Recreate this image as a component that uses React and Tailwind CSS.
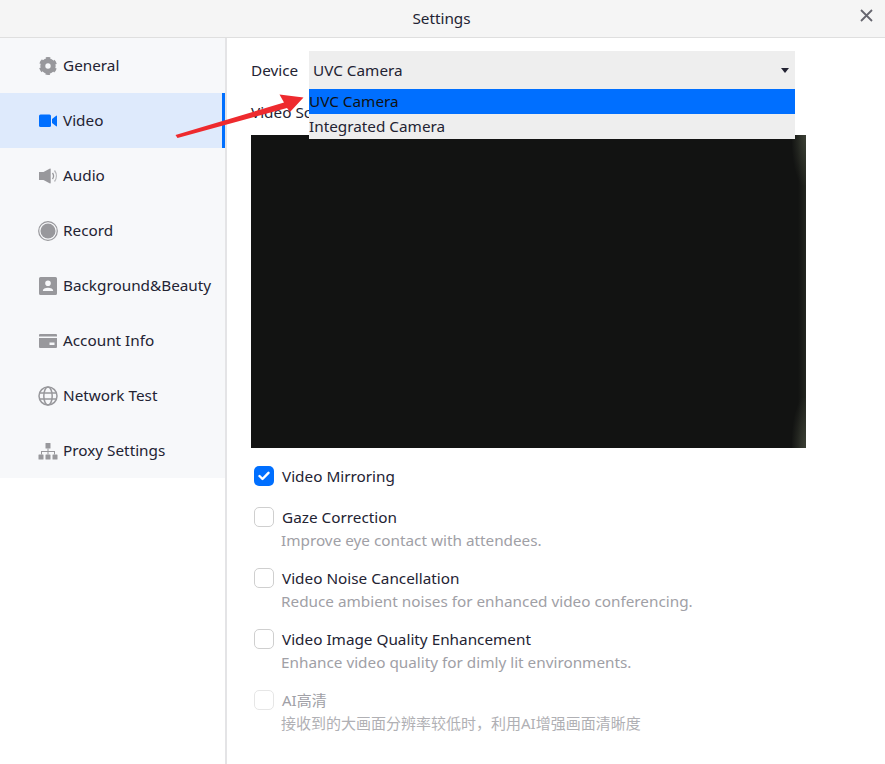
import React from 'react';

const NAV = [
  { key: 'general', label: 'General' },
  { key: 'video', label: 'Video', active: true },
  { key: 'audio', label: 'Audio' },
  { key: 'record', label: 'Record' },
  { key: 'beauty', label: 'Background&Beauty' },
  { key: 'account', label: 'Account Info' },
  { key: 'network', label: 'Network Test' },
  { key: 'proxy', label: 'Proxy Settings' },
];

const OPTIONS = [
  { title: 'Video Mirroring', checked: true },
  { title: 'Gaze Correction', desc: 'Improve eye contact with attendees.' },
  { title: 'Video Noise Cancellation', desc: 'Reduce ambient noises for enhanced video conferencing.' },
  { title: 'Video Image Quality Enhancement', desc: 'Enhance video quality for dimly lit environments.' },
  { title: 'AI高清', desc: '接收到的大画面分辨率较低时，利用AI增强画面清晰度', disabled: true },
];

function NavIcon({ name, color }) {
  if (name === 'general') {
    return (
      <svg width="20" height="20" viewBox="0 0 20 20" fill="none" stroke={color}>
        <circle cx="10" cy="10" r="5.2" strokeWidth="5" />
        <circle cx="10" cy="10" r="7.8" strokeWidth="2.4" strokeDasharray="4.2 3.97" transform="rotate(-105 10 10)" />
      </svg>
    );
  }
  if (name === 'video') {
    return (
      <svg width="20" height="20" viewBox="0 0 20 20" fill={color}>
        <rect x="1" y="3.5" width="12" height="12.5" rx="1.5" />
        <path d="M14 8 18.500 4.500c.3 0 .5.2.5.5v10c0 .3-.2.5-.5.5L14 12z" />
      </svg>
    );
  }
  if (name === 'audio') {
    return (
      <svg width="20" height="20" viewBox="0 0 20 20" fill={color}>
        <path d="M1 6h4.500L12 2.500c.3-.2.7 0 .7.4v14.200c0 .4-.4.6-.7.4L5.500 14H1z" />
        <path d="M14.500 7c1.300 1.800 1.300 4.200 0 6" fill="none" stroke={color} strokeWidth="1.300" />
        <path d="M16.500 4.500c2.400 3.200 2.400 7.800 0 11" fill="none" stroke={color} strokeWidth="1.300" opacity="0.7" />
      </svg>
    );
  }
  if (name === 'record') {
    return (
      <svg width="20" height="20" viewBox="0 0 20 20">
        <circle cx="10" cy="10" r="9.300" fill="none" stroke={color} strokeWidth="1.200" />
        <circle cx="10" cy="10" r="7.500" fill={color} />
      </svg>
    );
  }
  if (name === 'beauty') {
    return (
      <svg width="20" height="20" viewBox="0 0 20 20" fill={color}>
        <path fillRule="evenodd" d="M2.500 1h15A1.500 1.500 0 0 1 19 2.500v15a1.500 1.500 0 0 1-1.500 1.500h-15A1.500 1.500 0 0 1 1 17.500v-15A1.500 1.500 0 0 1 2.500 1zM10 4.500a2.800 2.800 0 1 0 0 5.600 2.800 2.800 0 0 0 0-5.600zM4.800 15h10.400c0-2.200-2.400-3.200-5.200-3.200S4.800 12.800 4.800 15z" />
      </svg>
    );
  }
  if (name === 'account') {
    return (
      <svg width="20" height="20" viewBox="0 0 20 20" fill={color}>
        <path fillRule="evenodd" d="M2 3h16a1 1 0 0 1 1 1v1.500H1V4a1 1 0 0 1 1-1zM1 7h18v9a1 1 0 0 1-1 1H2a1 1 0 0 1-1-1zm10.500 4.500v2.500h5v-2.500z" />
      </svg>
    );
  }
  if (name === 'network') {
    return (
      <svg width="20" height="20" viewBox="0 0 20 20" fill="none" stroke={color} strokeWidth="1.500">
        <circle cx="10" cy="10" r="9" />
        <ellipse cx="10" cy="10" rx="4.200" ry="9" />
        <path d="M1.500 7h17M1.500 13h17" />
      </svg>
    );
  }
  return (
    <svg width="20" height="20" viewBox="0 0 20 20" fill={color}>
      <rect x="7.500" y="2" width="5" height="5.500" rx="0.500" />
      <rect x="0.500" y="13.500" width="5" height="5" rx="0.500" />
      <rect x="7.500" y="13.500" width="5" height="5" rx="0.500" />
      <rect x="14.500" y="13.500" width="5" height="5" rx="0.500" />
      <path d="M9.500 7.500h1v2.500h6.500v3.500h-1V11h-5.500v2.500h-1V11H4v2.500H3V10h6.500z" />
    </svg>
  );
}

function Checkbox({ checked, disabled }) {
  if (checked) {
    return (
      <span className="flex h-5 w-5 shrink-0 items-center justify-center rounded-[5px] bg-[#006fff]">
        <svg width="12" height="10" viewBox="0 0 12 10" fill="none" stroke="#fff" strokeWidth="2.400" strokeLinecap="round" strokeLinejoin="round">
          <path d="M1.500 5 4.500 8l6-6.200" />
        </svg>
      </span>
    );
  }
  return <span className={`h-5 w-5 shrink-0 rounded-[5px] border bg-white ${disabled ? 'border-[#e6e6e6]' : 'border-[#cfcfcf]'}`} />;
}

export default function App() {
  return (
    <div className="relative flex h-[764px] w-[885px] flex-col overflow-hidden bg-white font-['Noto_Sans','Noto_Sans_CJK_SC',sans-serif] text-[15.3px] text-[#232333]">
      <header className="relative flex h-[38px] shrink-0 items-center justify-center border-b border-[#dfdfdf] bg-[#f5f5f5]">
        <span className="pr-[2px]">Settings</span>
        <svg className="absolute right-[12px] top-[9px]" width="13" height="13" viewBox="0 0 13 13" stroke="#66666f" strokeWidth="1.800">
          <path d="M1 1l11 11M12 1 1 12" />
        </svg>
      </header>

      <div className="flex min-h-0 flex-1">
        <aside className="w-[227px] shrink-0 border-r-2 border-[#e4e4e6]">
          <nav className="bg-[#f7f8fa]">
            {NAV.map((item) => (
              <div
                key={item.key}
                className={`flex h-[55px] items-center gap-[5px] pl-[38px] ${item.active ? 'border-r-[3px] border-[#006fff] bg-[#deeafc]' : ''}`}
              >
                <NavIcon name={item.key} color={item.active ? '#006fff' : '#98989c'} />
                <span>{item.label}</span>
              </div>
            ))}
          </nav>
        </aside>

        <main className="relative min-w-0 flex-1 pl-[24px] pt-[13px]">
          <div className="flex h-[38px] items-center">
            <span className="w-[58px] shrink-0">Device</span>
            <div className="flex h-[38px] w-[486px] items-center justify-between bg-[#eeeeee] pl-1 pr-[6px]">
              <span>UVC Camera</span>
              <span className="h-0 w-0 border-x-[4px] border-t-[5px] border-x-transparent border-t-[#232333]" />
            </div>
          </div>

          <div className="mt-[12px] h-[22px] leading-[22px]">Video Source</div>

          <div className="relative mt-[12px] h-[313px] w-[555px] bg-[#121312]">
            <div className="absolute inset-y-0 right-0 w-[8px] bg-gradient-to-r from-[#121312] to-[#23261f]" />
            <div className="absolute right-0 top-0 h-[50px] w-[14px] bg-[radial-gradient(ellipse_at_top_right,#3b3f34,transparent_75%)]" />
            <div className="absolute bottom-0 right-0 h-[50px] w-[14px] bg-[radial-gradient(ellipse_at_bottom_right,#3b3f34,transparent_75%)]" />
          </div>

          <div className="absolute left-[82px] top-[51px] w-[486px] bg-[#eeeeee]">
            <div className="h-[25px] bg-[#006fff] leading-[25px] text-[#111]">UVC Camera</div>
            <div className="h-[25px] leading-[25px]">Integrated Camera</div>
          </div>

          <div className="mt-[18px] flex flex-col gap-[18px] pl-[3px]">
            {OPTIONS.map((opt) => (
              <div key={opt.title} className={`flex items-start gap-[8px] ${opt.checked ? 'mb-[3px]' : ''}`}>
                <Checkbox checked={opt.checked} disabled={opt.disabled} />
                <div className={opt.disabled ? 'text-[15px] text-[#a0a0a6]' : ''}>
                  <div className="h-5 leading-5">{opt.title}</div>
                  {opt.desc && (
                    <div className={`-ml-px mt-[3px] h-5 leading-5 ${opt.disabled ? 'text-[#b0b0b4]' : 'text-[#a0a0a6]'}`}>{opt.desc}</div>
                  )}
                </div>
              </div>
            ))}
          </div>
        </main>
      </div>

      {/* red annotation arrow sits on top of the screenshot */}
      <svg className="pointer-events-none absolute left-[170px] top-[85px]" width="140" height="56" viewBox="170 85 140 56">
        <path d="M175.500 135 284 102.500 279.500 94.500 303.500 97.500 290 112 287 108 177.500 138z" fill="#ee2a2e" />
      </svg>
    </div>
  );
}
